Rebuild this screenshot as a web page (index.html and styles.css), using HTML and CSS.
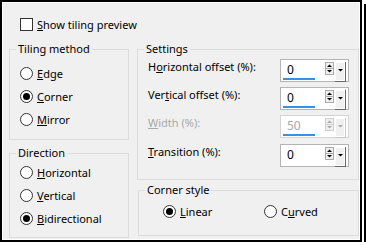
FILE: index.html
```html
<!DOCTYPE html>
<html>
  <head>
    <title>Tiling</title>
    <link rel="stylesheet" href="styles.css">
  </head>
  <body>
    <div class="frame">
      <div class="panel">
        <div class="check-row"><span class="checkbox"></span><span><u>S</u>how tiling preview</span></div>
        <div class="columns">
          <div class="col-left">
            <div class="group tiling">
              <div class="group-title">Tiling method</div>
              <div class="options">
                <div class="option"><span class="radio"></span><span><u>E</u>dge</span></div>
                <div class="option"><span class="radio on"></span><span><u>C</u>orner</span></div>
                <div class="option"><span class="radio"></span><span><u>M</u>irror</span></div>
              </div>
            </div>
            <div class="group direction">
              <div class="group-title">Direction</div>
              <div class="options">
                <div class="option"><span class="radio"></span><span><u>H</u>orizontal</span></div>
                <div class="option"><span class="radio"></span><span><u>V</u>ertical</span></div>
                <div class="option"><span class="radio on"></span><span><u>B</u>idirectional</span></div>
              </div>
            </div>
          </div>
          <div class="col-right">
            <div class="group settings">
              <div class="group-title">Settings</div>
              <div class="setting-list">
                <div class="setting">
                  <span class="label">H<u>o</u>rizontal offset (%):</span>
                  <div class="field">
                    <div class="value"><span class="num">0</span><div class="bar"></div></div>
                    <svg class="spin" width="21" height="20" viewBox="0 0 21 20">
                      <rect x="0.5" y="0.5" width="8" height="12" fill="#f0f0f0" stroke="#acacac"/>
                      <line x1="0" y1="6.5" x2="9" y2="6.5" stroke="#acacac"/>
                      <path d="M2 5h5L4.5 2.5z" fill="#000"/>
                      <path d="M2 8h5l-2.5 2.5z" fill="#000"/>
                      <rect x="10.5" y="0.5" width="9" height="18" fill="#f0f0f0" stroke="#fff"/>
                      <path d="M20.5 0v20M10 19.5h11" stroke="#696969"/>
                      <path d="M13 7h5l-2.5 2.5z" fill="#000"/>
                    </svg>
                  </div>
                </div>
                <div class="setting">
                  <span class="label">Ver<u>t</u>ical offset (%):</span>
                  <div class="field">
                    <div class="value"><span class="num">0</span><div class="bar"></div></div>
                    <svg class="spin" width="21" height="20" viewBox="0 0 21 20">
                      <rect x="0.5" y="0.5" width="8" height="12" fill="#f0f0f0" stroke="#acacac"/>
                      <line x1="0" y1="6.5" x2="9" y2="6.5" stroke="#acacac"/>
                      <path d="M2 5h5L4.5 2.5z" fill="#000"/>
                      <path d="M2 8h5l-2.5 2.5z" fill="#000"/>
                      <rect x="10.5" y="0.5" width="9" height="18" fill="#f0f0f0" stroke="#fff"/>
                      <path d="M20.5 0v20M10 19.5h11" stroke="#696969"/>
                      <path d="M13 7h5l-2.5 2.5z" fill="#000"/>
                    </svg>
                  </div>
                </div>
                <div class="setting disabled">
                  <span class="label"><u>W</u>idth (%):</span>
                  <div class="field">
                    <div class="value"><span class="num">50</span><div class="bar"></div></div>
                    <svg class="spin" width="21" height="20" viewBox="0 0 21 20">
                      <rect x="0.5" y="0.5" width="8" height="12" fill="#f0f0f0" stroke="#d0d0d0"/>
                      <line x1="0" y1="6.5" x2="9" y2="6.5" stroke="#d0d0d0"/>
                      <path d="M2 5h5L4.5 2.5z" fill="#a8a8a8"/>
                      <path d="M2 8h5l-2.5 2.5z" fill="#a8a8a8"/>
                      <rect x="10.5" y="0.5" width="9" height="18" fill="#f0f0f0" stroke="#fff"/>
                      <path d="M20.5 0v20M10 19.5h11" stroke="#c8c8c8"/>
                      <path d="M13 7h5l-2.5 2.5z" fill="#a8a8a8"/>
                    </svg>
                  </div>
                </div>
                <div class="setting last">
                  <span class="label"><u>T</u>ransition (%):</span>
                  <div class="field">
                    <div class="value"><span class="num">0</span></div>
                    <svg class="spin" width="21" height="20" viewBox="0 0 21 20">
                      <rect x="0.5" y="0.5" width="8" height="12" fill="#f0f0f0" stroke="#acacac"/>
                      <line x1="0" y1="6.5" x2="9" y2="6.5" stroke="#acacac"/>
                      <path d="M2 5h5L4.5 2.5z" fill="#000"/>
                      <path d="M2 8h5l-2.5 2.5z" fill="#000"/>
                      <rect x="10.5" y="0.5" width="9" height="18" fill="#f0f0f0" stroke="#fff"/>
                      <path d="M20.5 0v20M10 19.5h11" stroke="#696969"/>
                      <path d="M13 7h5l-2.5 2.5z" fill="#000"/>
                    </svg>
                  </div>
                </div>
              </div>
            </div>
            <div class="group corner">
              <div class="group-title">Corner style</div>
              <div class="corner-options">
                <div class="option"><span class="radio on"></span><span><u>L</u>inear</span></div>
                <div class="option"><span class="radio"></span><span>C<u>u</u>rved</span></div>
              </div>
            </div>
          </div>
        </div>
      </div>
    </div>
  </body>
</html>
```

FILE: styles.css
```css
body {
  margin: 0;
  font-family: "Noto Sans", sans-serif;
  font-size: 11px;
  color: #000;
  background: #fff;
}

.frame {
  width: 358px;
  height: 238px;
  border: 2px solid #000;
  box-shadow: 2px 2px 0 #fff, 4px 4px 0 #000;
}

.panel {
  height: 100%;
  box-sizing: border-box;
  border: 1px solid #fff;
  background: #f0f0f0;
  padding: 15px 0 0 6px;
}

.check-row {
  display: flex;
  align-items: center;
  gap: 4px;
  height: 13px;
  padding-left: 11px;
}

.checkbox {
  width: 13px;
  height: 13px;
  box-sizing: border-box;
  border: 1px solid #333;
  background: #fff;
}

.columns {
  display: flex;
  gap: 8px;
  margin-top: 18px;
}

.col-left {
  width: 120px;
  display: flex;
  flex-direction: column;
  gap: 13px;
}

.col-right {
  width: 222px;
  display: flex;
  flex-direction: column;
  gap: 10px;
}

/* group box: title sits on the top border */
.group {
  box-sizing: border-box;
  border: 1px solid #dcdcdc;
}

.group-title {
  display: table;
  margin: -9px 0 0 6px;
  padding: 0 2px;
  line-height: 16px;
  background: #f0f0f0;
}

.tiling {
  height: 91px;
}

.tiling .options {
  padding-top: 5px;
}

.direction {
  height: 85px;
}

.settings {
  height: 131px;
}

.setting-list {
  padding-top: 2px;
}

.corner {
  height: 46px;
  margin-left: 1px;
}

.option {
  display: flex;
  align-items: center;
  gap: 4px;
  height: 23px;
  padding-left: 10px;
}

.radio {
  width: 13px;
  height: 13px;
  box-sizing: border-box;
  border: 1px solid #333;
  border-radius: 50%;
  background: #fff;
  display: inline-flex;
  align-items: center;
  justify-content: center;
}

.radio.on::after {
  content: "";
  width: 7px;
  height: 7px;
  border-radius: 50%;
  background: #000;
}

.corner-options {
  display: flex;
  padding: 2px 0 0 14px;
}

.corner-options .option {
  width: 91px;
}

.setting {
  display: flex;
  align-items: flex-start;
  justify-content: space-between;
  height: 28px;
  padding: 0 9px 0 10px;
}

.setting.last {
  margin-top: 1px;
}

.label {
  line-height: 16px;
}

.field {
  width: 69px;
  height: 23px;
  box-sizing: border-box;
  border: 1px solid #b4b4b4;
  background: #fff;
  display: flex;
}

.value {
  padding: 2px 0 0 2px;
}

.num {
  display: block;
  padding-left: 4px;
  line-height: 16px;
  font-size: 12px;
}

.bar {
  width: 32px;
  height: 2px;
  background: #3b8fe4;
}

.spin {
  margin: 2px 2px 0 auto;
}

.disabled .label,
.disabled .num {
  color: #a8a8a8;
}

.disabled .field {
  border-color: #d4d4d4;
}
```
